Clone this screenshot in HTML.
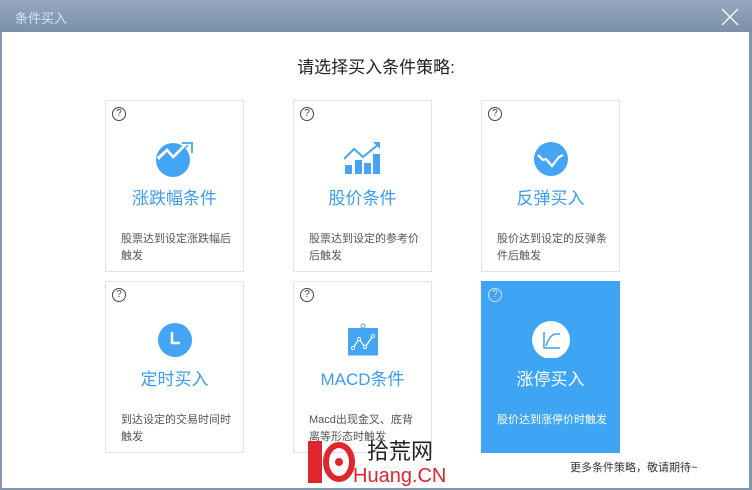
<!DOCTYPE html><html><head><meta charset="utf-8"><style>
*{margin:0;padding:0;box-sizing:border-box}
body{width:752px;height:490px;background:#8497b0;font-family:"Liberation Sans","Noto Sans CJK SC",sans-serif;position:relative;overflow:hidden}
.tb{position:absolute;left:0;top:0;width:752px;height:32px;background:linear-gradient(#97a8bf,#7b8fa9)}
.tb span{position:absolute;left:15px;top:8px;color:#cfe6f8;font-size:13px}
.x{position:absolute;left:721px;top:8px}
.main{position:absolute;left:2px;top:32px;width:747px;height:456px;background:#fff}
h1{position:absolute;top:53px;left:0;width:752px;text-align:center;font-size:17px;font-weight:normal;color:#222}
.c{position:absolute;width:139px;height:172px;border:1px solid #e3e3e3;background:#fff}
.c .q{position:absolute;left:6px;top:6px;width:14px;height:14px;border:1.3px solid #444;border-radius:50%;font-size:10px;line-height:12px;text-align:center;color:#444}
.c .ic{position:absolute;left:50px;top:38px;width:38px;height:38px}
.c .t{position:absolute;top:83px;left:0;width:100%;text-align:center;font-size:17px;color:#3c9cf0}
.c .d{position:absolute;top:130px;left:15px;right:10px;font-size:11px;line-height:17px;color:#555}
.c.b{background:#3ea4f4;border-color:#3ea4f4}
.c.b .t,.c.b .d{color:#fff}.c.b .q{border-color:#cfe8fb;color:#cfe8fb}
.more{position:absolute;left:570px;top:459px;font-size:11px;color:#333}
</style></head><body>
<div class="tb"><span>条件买入</span><svg class="x" width="18" height="18" viewBox="0 0 18 18"><path d="M1 1L17 17M17 1L1 17" stroke="#fff" stroke-width="1.3"/></svg></div>
<div class="main"></div>
<h1>请选择买入条件策略:</h1>

<div class="c" style="left:105px;top:100px"><div class="q">?</div>
<svg class="ic" viewBox="0 0 38 38"><circle cx="17" cy="21" r="17" fill="#44a5f5"/><path d="M2 20 L11 12 L17 19 L30 6" stroke="#fff" stroke-width="4" fill="none"/><path d="M3 22 L11 14 L17 21 L32 6" stroke="#44a5f5" stroke-width="1.5" fill="none"/><path d="M26 4 H36 V14" stroke="#44a5f5" stroke-width="1.8" fill="none"/></svg>
<div class="t">涨跌幅条件</div><div class="d">股票达到设定涨跌幅后触发</div></div>

<div class="c" style="left:293px;top:100px"><div class="q">?</div>
<svg class="ic" viewBox="0 0 38 38"><rect x="1" y="26" width="7" height="9" fill="#44a5f5"/><rect x="11" y="21" width="7" height="14" fill="#44a5f5"/><rect x="20" y="24" width="7" height="11" fill="#44a5f5"/><rect x="29" y="15" width="7" height="20" fill="#44a5f5"/><path d="M0 20 L10 10 L19 18 L35 5" stroke="#44a5f5" stroke-width="2" fill="none"/><path d="M29 3 H36 V10Z" fill="#44a5f5"/></svg>
<div class="t">股价条件</div><div class="d">股票达到设定的参考价后触发</div></div>

<div class="c" style="left:481px;top:100px"><div class="q">?</div>
<svg class="ic" viewBox="0 0 38 38"><circle cx="19" cy="20" r="17" fill="#44a5f5"/><path d="M6 16 L11 21 L14 20 L20 27 L27 18 L31 16" stroke="#fff" stroke-width="2.2" fill="none"/></svg>
<div class="t">反弹买入</div><div class="d">股价达到设定的反弹条件后触发</div></div>

<div class="c" style="left:105px;top:281px"><div class="q">?</div>
<svg class="ic" viewBox="0 0 38 38"><circle cx="19" cy="20" r="17" fill="#44a5f5"/><path d="M16 12 V23 H24" stroke="#fff" stroke-width="2.5" fill="none"/></svg>
<div class="t">定时买入</div><div class="d">到达设定的交易时间时触发</div></div>

<div class="c" style="left:293px;top:281px"><div class="q">?</div>
<svg class="ic" viewBox="0 0 38 38"><circle cx="19" cy="6" r="2" stroke="#44a5f5" fill="none"/><rect x="4" y="8" width="30" height="26" fill="#44a5f5"/><rect x="4" y="34" width="30" height="1.5" fill="#44a5f5"/><path d="M9 28 L15 19 L21 27 L29 16" stroke="#fff" stroke-width="1.3" fill="none"/><g fill="#44a5f5" stroke="#fff" stroke-width="1"><circle cx="15" cy="19" r="1.6"/><circle cx="21" cy="27" r="1.6"/><circle cx="29" cy="16" r="1.6"/><circle cx="9" cy="28" r="1.6"/></g></svg>
<div class="t">MACD条件</div><div class="d">Macd出现金叉、底背离等形态时触发</div></div>

<div class="c b" style="left:481px;top:281px"><div class="q">?</div>
<svg class="ic" viewBox="0 0 38 38"><circle cx="19" cy="20" r="19" fill="#fff"/><path d="M12 12 V28 H28" stroke="#3ea4f4" stroke-width="1.5" fill="none"/><path d="M14 26 Q18 14 24 14 H28" stroke="#3ea4f4" stroke-width="1.5" fill="none"/></svg>
<div class="t">涨停买入</div><div class="d">股价达到涨停价时触发</div></div>

<div style="position:absolute;left:308px;top:441px;width:14px;height:42px;background:#e0262d"></div>
<svg style="position:absolute;left:323px;top:442px" width="32" height="40" viewBox="0 0 32 40"><ellipse cx="16" cy="20" rx="13" ry="17" fill="none" stroke="#e0262d" stroke-width="6"/><circle cx="16" cy="20" r="4" fill="#e0262d"/></svg>
<div style="position:absolute;left:367px;top:440px;font-size:22px;color:#222;line-height:24px">拾荒网</div>
<div style="position:absolute;left:353px;top:465px;font-size:20px;color:#e0262d;line-height:22px">Huang.CN</div>
<div class="more">更多条件策略，敬请期待~</div>
</body></html>
